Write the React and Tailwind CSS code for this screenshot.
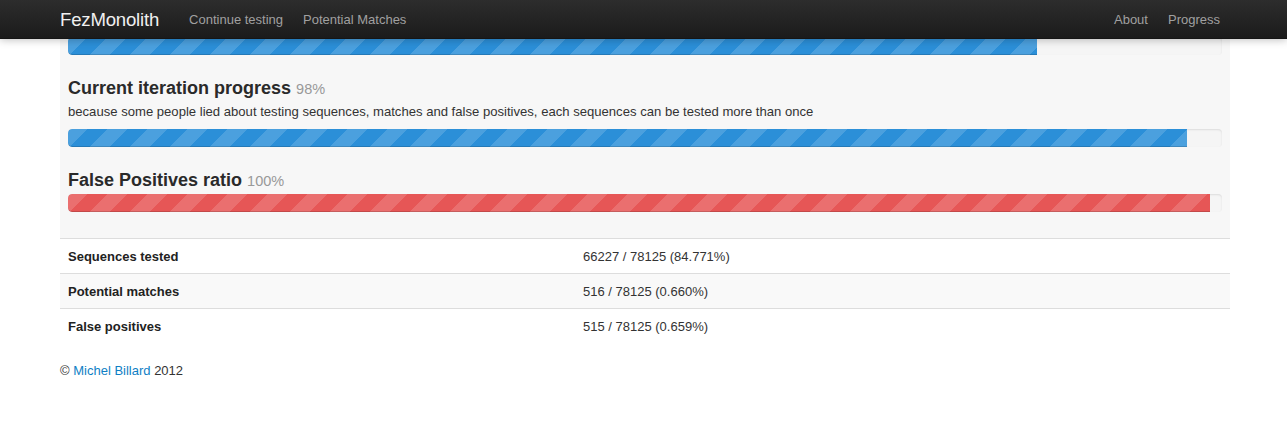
const stripes =
  "bg-[linear-gradient(135deg,rgba(255,255,255,0.15)_25%,transparent_25%,transparent_50%,rgba(255,255,255,0.15)_50%,rgba(255,255,255,0.15)_75%,transparent_75%,transparent)] bg-[length:40px_40px]";

const ProgressBar = ({ fill, color }) => (
  <div className="h-[18px] w-full rounded-[4px] bg-[#f5f5f5] shadow-[inset_0_1px_2px_rgba(0,0,0,0.1)] overflow-hidden">
    <div
      className={`h-full rounded-l-[4px] shadow-[inset_0_-1px_0_rgba(0,0,0,0.15)] ${stripes} ${color} ${fill}`}
    />
  </div>
);

const Heading = ({ title, value }) => (
  <h4 className="text-[18px] leading-[22px] font-bold text-[#2a2a2a]">
    {title} <span className="text-[14.5px] font-normal text-[#999]">{value}</span>
  </h4>
);

const rows = [
  { label: "Sequences tested", value: "66227 / 78125 (84.771%)" },
  { label: "Potential matches", value: "516 / 78125 (0.660%)" },
  { label: "False positives", value: "515 / 78125 (0.659%)" },
];

export default function App() {
  return (
    <div className="min-h-screen bg-white text-[#333] font-['Liberation_Sans',Arial,sans-serif]">
      <nav className="relative z-10 h-[39px] bg-gradient-to-b from-[#2d2d2d] to-[#1b1b1b] border-b border-[#151515] shadow-[0_1px_8px_rgba(0,0,0,0.25)]">
        <div className="ml-[60px] w-[1170px] h-full flex items-center pt-[1px]">
          <span className="pr-[20px] text-[18.6px] text-[#f0f0f0] tracking-[-0.2px]">FezMonolith</span>
          <a className="px-[10px] text-[13px] text-[#a0a0a0]">Continue testing</a>
          <a className="px-[10px] text-[13px] text-[#a0a0a0]">Potential Matches</a>
          <div className="ml-auto flex">
            <a className="px-[10px] text-[13px] text-[#a0a0a0]">About</a>
            <a className="px-[10px] text-[13px] text-[#a0a0a0]">Progress</a>
          </div>
        </div>
      </nav>

      <main className="ml-[60px] w-[1170px]">
        <section className="-mt-[2px] bg-[#f7f7f7] px-[8px] pb-[26px]">
          <ProgressBar fill="w-[969px]" color="bg-[#2b8fd8]" />

          <div className="mt-[22px]">
            <Heading title="Current iteration progress" value="98%" />
          </div>
          <p className="mt-[3px] text-[13.1px] leading-[18px]">
            because some people lied about testing sequences, matches and false positives, each sequences can be tested more than once
          </p>
          <div className="mt-[8px]">
            <ProgressBar fill="w-[1119px]" color="bg-[#2b8fd8]" />
          </div>

          <div className="mt-[22px]">
            <Heading title="False Positives ratio" value="100%" />
          </div>
          <div className="mt-[2px]">
            <ProgressBar fill="w-[1142px]" color="bg-[#e65656]" />
          </div>
        </section>

        <table className="w-full text-[13px] leading-[18px]">
          <tbody>
            {rows.map((r, i) => (
              <tr key={r.label} className={`border-t border-[#dddddd] ${i === 1 ? "bg-[#f9f9f9]" : ""}`}>
                <td className="w-[515px] px-[8px] pt-[9px] pb-[7px] text-[13px] font-bold text-[#222]">{r.label}</td>
                <td className="px-[8px] pt-[9px] pb-[7px]">{r.value}</td>
              </tr>
            ))}
          </tbody>
        </table>

        <footer className="mt-[19px] text-[13px] leading-[18px]">
          © <a className="text-[#0f7fc5]">Michel Billard</a> 2012
        </footer>
      </main>
    </div>
  );
}
